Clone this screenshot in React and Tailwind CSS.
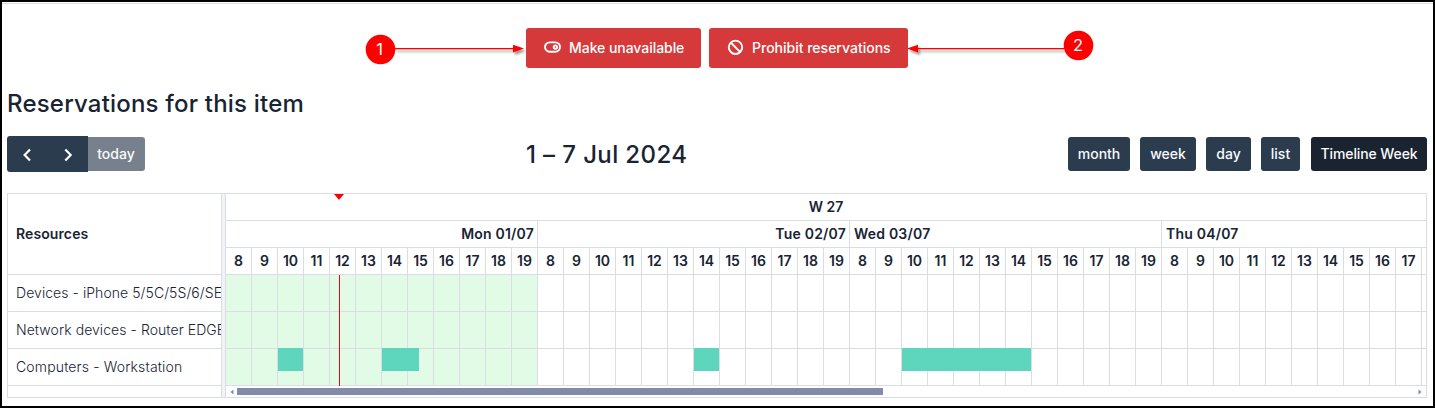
import React from "react";

const HOURS = [8, 9, 10, 11, 12, 13, 14, 15, 16, 17, 18, 19];
const CELLS = Array.from({ length: 46 }, (_, i) => ({ hour: HOURS[i % 12], today: i < 12 }));

const ROWS = [
  { name: "Devices - iPhone 5/5C/5S/6/SE", tracking: "tracking-[0.06px]", events: [] },
  { name: "Network devices - Router EDGE", tracking: "tracking-[0.06px]", events: [] },
  {
    name: "Computers - Workstation",
    tracking: "tracking-[0.15px]",
    events: [
      { left: 52, width: 25 },
      { left: 156, width: 37 },
      { left: 468, width: 25 },
      { left: 676, width: 129 },
    ],
  },
];

function ActionButton({ icon, children, className }) {
  return (
    <button className={`flex h-10 items-center rounded-[3px] bg-[#d63939] text-[14px] font-medium text-white ${className}`}>
      {icon}
      <span className="pb-0.5">{children}</span>
    </button>
  );
}

function ViewButton({ children, className }) {
  return (
    <button className={`flex h-[34px] items-center justify-center rounded-[3px] pb-0.5 text-[14px] font-medium text-[#f8fafc] ${className}`}>
      {children}
    </button>
  );
}

function Chevron({ d }) {
  return (
    <svg width="12" height="16" viewBox="0 0 12 16" fill="none" stroke="#fff" strokeWidth="2.2">
      <path d={d} />
    </svg>
  );
}

function Annotations() {
  return (
    <svg className="pointer-events-none absolute -top-0.5 -left-0.5" width="1435" height="100" viewBox="0 0 1435 100">
      <defs>
        <filter id="soft" x="-10%" y="-200%" width="120%" height="500%">
          <feDropShadow dx="2" dy="2.5" stdDeviation="1.2" floodColor="#000" floodOpacity="0.4" />
        </filter>
      </defs>
      <g filter="url(#soft)" fill="#f00">
        <rect x="395" y="48" width="120" height="1.3" />
        <path d="M513 44.8 L524 48.6 L513 52.4 Z" />
      </g>
      <g filter="url(#soft)" fill="#f00">
        <rect x="916" y="48" width="148" height="1.3" />
        <path d="M918 44.8 L907 48.6 L918 52.4 Z" />
      </g>
      <circle cx="380.5" cy="49.5" r="14.8" fill="#f00" />
      <circle cx="1078.5" cy="45.5" r="14.8" fill="#f00" />
      <g fill="#fff" fontSize="16.5" textAnchor="middle" fontFamily="'Inter', sans-serif">
        <text x="379.5" y="55">1</text>
        <text x="1078" y="51">2</text>
      </g>
    </svg>
  );
}

export default function App() {
  return (
    <div className="relative flex h-[408px] w-[1435px] flex-col overflow-hidden border-2 border-black bg-white font-['Inter',sans-serif] text-[#182433]">
      <div className="mt-px h-px shrink-0 bg-[#dadfe5]" />
      <div className="mt-6 flex shrink-0 gap-2 pl-[524px]">
        <ActionButton
          className="w-[175px] gap-2 pl-[18px] tracking-[-0.05px]"
          icon={
            <svg width="17" height="12" viewBox="0 0 17 12" fill="none" stroke="#fff" className="-mt-0.5">
              <rect x="1" y="1.4" width="15" height="9.4" rx="4.7" strokeWidth="1.9" />
              <circle cx="11.4" cy="6.1" r="1.7" strokeWidth="1.9" />
            </svg>
          }
        >
          Make unavailable
        </ActionButton>
        <ActionButton
          className="w-[199px] gap-2 pl-[18px]"
          icon={
            <svg width="17" height="17" viewBox="0 0 17 17" fill="none" stroke="#fff" strokeWidth="1.9" className="-mt-0.5">
              <circle cx="8.5" cy="8.3" r="6.7" />
              <path d="M3.7 3.5 L13.3 13.1" />
            </svg>
          }
        >
          Prohibit reservations
        </ActionButton>
      </div>

      <h2 className="mt-5 ml-[5px] h-8 shrink-0 text-[24px] leading-8 font-medium tracking-[0.2px] whitespace-nowrap">Reservations for this item</h2>

      <div className="mt-4 ml-[5px] flex h-9 w-[1420px] shrink-0 items-center">
        <div className="flex w-[138px] items-center">
          <div className="flex h-9 w-[81px] rounded-l-[3px] bg-[#2c3c4f]">
            <button className="flex flex-1 items-center justify-center pt-0.5">
              <Chevron d="M9 2.4 L3.6 8 L9 13.6" />
            </button>
            <button className="flex flex-1 items-center justify-center pt-0.5">
              <Chevron d="M3.3 2.4 L8.7 8 L3.3 13.6" />
            </button>
          </div>
          <button className="flex h-[34px] w-[57px] items-center justify-center rounded-r-[3px] bg-[#77818d] pr-px pb-0.5 text-[14px] font-medium text-[#f8fafc]">
            today
          </button>
        </div>
        <h2 className="w-[923px] pt-0.5 pl-[381px] text-[24px] leading-8 font-medium tracking-[0.38px] whitespace-nowrap">1 – 7 Jul 2024</h2>
        <div className="flex">
          <ViewButton className="w-[62px] bg-[#2c3c4f]">month</ViewButton>
          <ViewButton className="ml-2.5 w-14 bg-[#2c3c4f]">week</ViewButton>
          <ViewButton className="ml-2.5 w-[45px] bg-[#2c3c4f]">day</ViewButton>
          <ViewButton className="ml-2.5 w-[39px] bg-[#2c3c4f]">list</ViewButton>
          <ViewButton className="ml-[11px] w-[116px] bg-[#1a2430] tracking-[-0.1px]">Timeline Week</ViewButton>
        </div>
      </div>

      <div className="mt-[21px] ml-[5px] flex h-[205px] w-[1420px] shrink-0 border border-[#dadde3] text-[14px]">
        <div className="w-[213px] shrink-0 overflow-hidden">
          <div className="flex h-[81px] items-center border-b border-[#dadde3] pb-0.5 pl-2 font-semibold tracking-[0.1px]">Resources</div>
          {ROWS.map((row) => (
            <div
              key={row.name}
              className={`flex h-[37px] items-center border-b border-[#dadde3] pb-0.5 pl-2 font-light whitespace-nowrap ${row.tracking}`}
            >
              {row.name}
            </div>
          ))}
        </div>
        <div className="w-[5px] shrink-0 border-x border-[#dadde3] bg-[#f1f3f6]" />

        <div className="relative flex w-[1200px] shrink-0 flex-col overflow-hidden">
          <div className="flex h-[27px] shrink-0 items-center justify-center border-b border-[#dadde3] pb-0.5 font-semibold">W 27</div>
          <div className="flex h-[27px] shrink-0 items-center border-b border-[#dadde3] font-semibold tracking-[0.2px]">
            <div className="flex h-full w-[312px] shrink-0 items-center justify-end border-r border-[#dadde3] pr-[3px] pb-0.5">Mon 01/07</div>
            <div className="flex h-full w-[312px] shrink-0 items-center justify-end border-r border-[#dadde3] pr-[3px] pb-0.5">Tue 02/07</div>
            <div className="flex h-full w-[312px] shrink-0 items-center border-r border-[#dadde3] pb-0.5 pl-1">Wed 03/07</div>
            <div className="flex h-full items-center pb-0.5 pl-1">Thu 04/07</div>
          </div>
          <div className="flex h-[27px] shrink-0 border-b border-[#dadde3] font-semibold">
            {CELLS.map((c, i) => (
              <div key={i} className="flex w-[26px] shrink-0 items-center justify-center border-r border-[#dadde3] pb-0.5">
                {c.hour}
              </div>
            ))}
          </div>
          {ROWS.map((row) => (
            <div key={row.name} className="relative flex h-[37px] shrink-0">
              {CELLS.map((c, i) => (
                <div
                  key={i}
                  className={`w-[26px] shrink-0 border-r border-b border-[#dadde3] ${c.today ? "bg-[#e2fbe6]" : ""}`}
                />
              ))}
              <div className="flex-1 border-b border-[#dadde3]" />
              {row.events.map((e) => (
                <div key={e.left} className="absolute -top-px h-[23px] bg-[#5dd6bd]" style={{ left: e.left, width: e.width }} />
              ))}
            </div>
          ))}
          <div className="flex h-[11px] shrink-0 items-center pr-[4px] pl-[4px]">
            <svg width="4" height="6" viewBox="0 0 4 6" className="shrink-0">
              <path d="M3.5 0.5 V5.5 L0.5 3 Z" fill="#828ba8" />
            </svg>
            <div className="ml-[3px] h-[7px] w-[646px] bg-[#828ba8]" />
            <svg width="4" height="6" viewBox="0 0 4 6" className="ml-auto shrink-0">
              <path d="M0.5 0.5 V5.5 L3.5 3 Z" fill="#828ba8" />
            </svg>
          </div>
          <div className="absolute top-0 left-[108px] border-x-[5px] border-t-[6px] border-x-transparent border-t-[#f00]" />
          <div className="absolute top-[81px] left-[113px] h-[111px] w-px bg-[#f00]" />
        </div>
      </div>

      <Annotations />
    </div>
  );
}
